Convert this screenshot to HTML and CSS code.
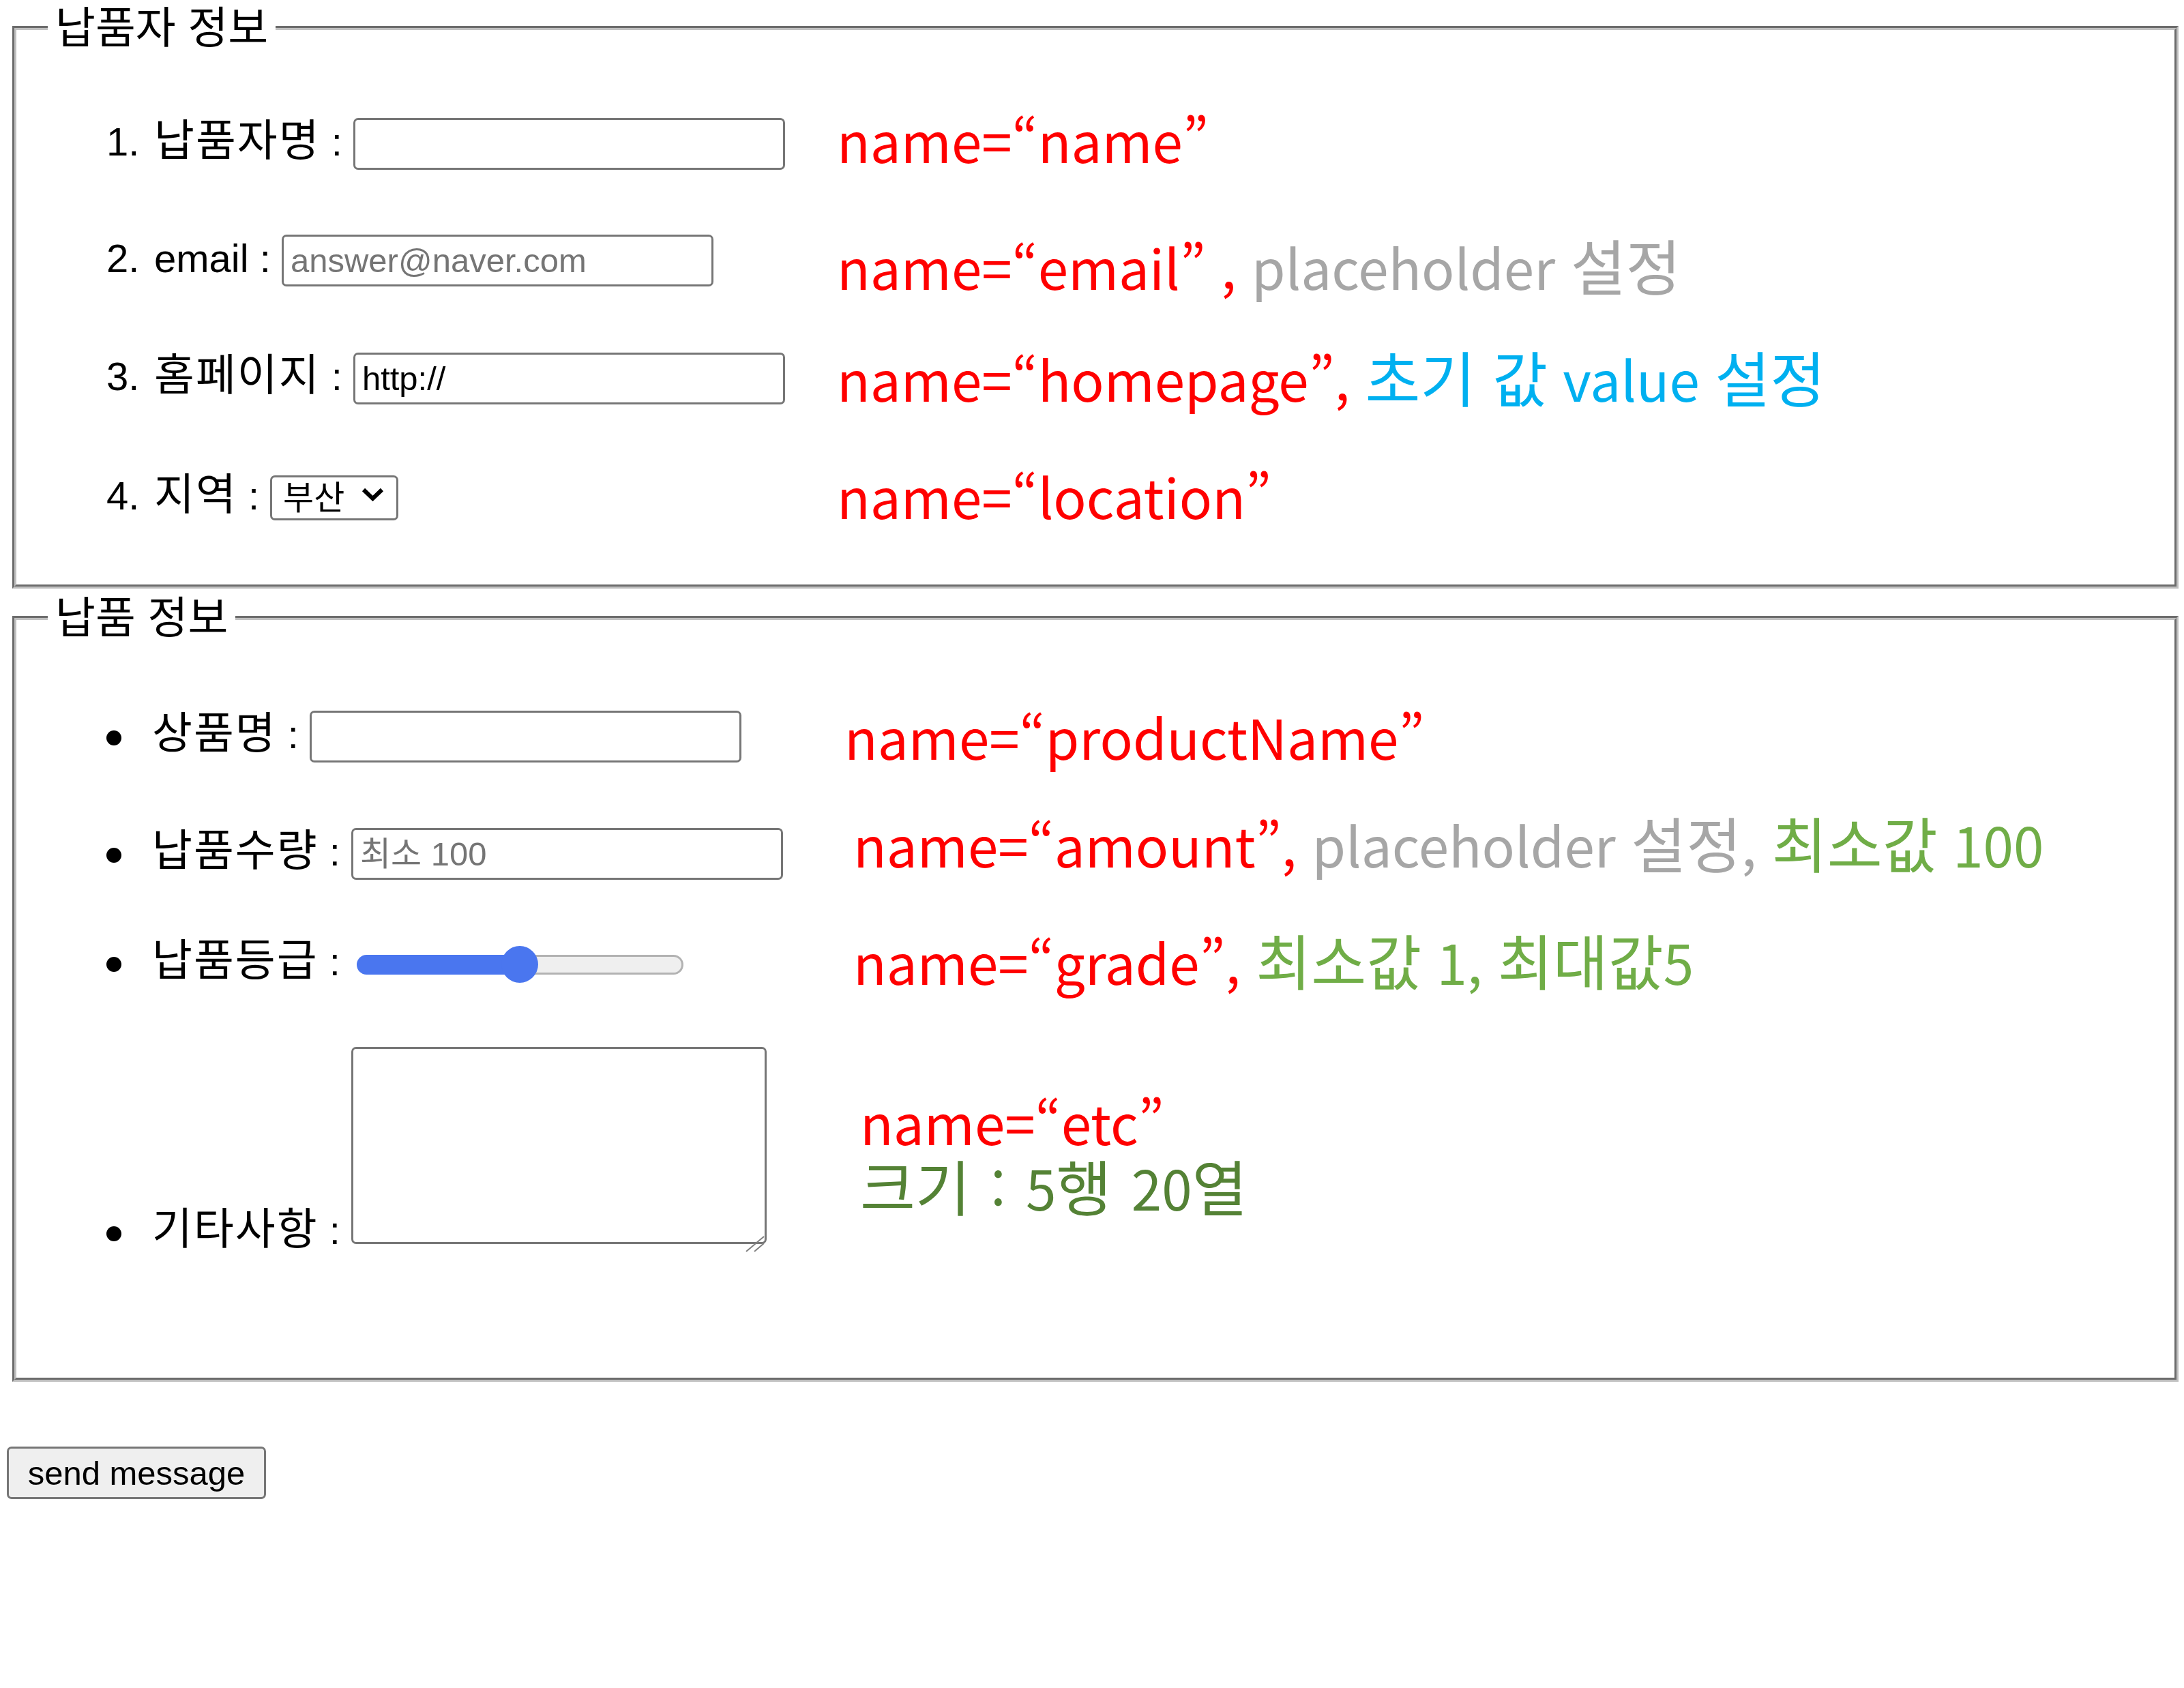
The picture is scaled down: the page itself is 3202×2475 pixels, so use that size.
FILE: index.html
```html
<!DOCTYPE html>
<html lang="ko">
<head>
<meta charset="utf-8">
<title>납품 정보 입력</title>
<link rel="stylesheet" href="styles.css">
</head>
<body>
<form class="order-form" action="#" method="post">
  <fieldset class="group">
    <legend class="group-title">납품자 정보</legend>
    <div class="rows rows-supplier">
      <div class="row">
        <div class="field"><span class="num">1.</span><span class="ko">납품자명</span> : <input class="text-input" type="text" name="name"></div>
        <p class="note note-up"><span class="c-red">name=“name”</span></p>
      </div>
      <div class="row">
        <div class="field"><span class="num">2.</span>email : <input class="text-input" type="email" name="email" placeholder="answer@naver.com"></div>
        <p class="note note-low"><span class="c-red">name=“email” ,</span> <span class="c-gray">placeholder <span class="hk">설정</span></span></p>
      </div>
      <div class="row">
        <div class="field"><span class="num">3.</span><span class="ko">홈페이지</span> : <input class="text-input" type="text" name="homepage" value="http://"></div>
        <p class="note"><span class="c-red">name=“homepage”,</span> <span class="c-blue"><span class="hk">초기 값</span> value <span class="hk">설정</span></span></p>
      </div>
      <div class="row">
        <div class="field"><span class="num">4.</span><span class="ko">지역</span> : <span class="select-wrap"><select class="select" name="location"><option>부산</option><option>서울</option><option>대구</option></select><svg class="chevron" viewBox="0 0 33 20" width="33" height="20" aria-hidden="true"><polyline points="3,3 16.5,16 30,3" fill="none" stroke="#000" stroke-width="6"/></svg></span></div>
        <p class="note"><span class="c-red">name=“location”</span></p>
      </div>
    </div>
  </fieldset>
  <fieldset class="group">
    <legend class="group-title">납품 정보</legend>
    <div class="rows rows-product">
      <div class="row">
        <div class="field"><span class="dot"></span><span class="ko">상품명</span> : <input class="text-input" type="text" name="productName"></div>
        <p class="note note-s1"><span class="c-red">name=“productName”</span></p>
      </div>
      <div class="row">
        <div class="field"><span class="dot"></span><span class="ko">납품수량</span> : <input class="text-input" type="number" name="amount" min="100" placeholder="최소 100"></div>
        <p class="note note-s2 note-up2"><span class="c-red">name=“amount”,</span> <span class="c-gray">placeholder <span class="hk">설정</span>,</span> <span class="c-green"><span class="hk">최소값</span> 100</span></p>
      </div>
      <div class="row row-short">
        <div class="field"><span class="dot"></span><span class="ko">납품등급</span> : <input class="grade" type="range" name="grade" min="1" max="5" value="3"></div>
        <p class="note note-s2"><span class="c-red">name=“grade”,</span> <span class="c-green"><span class="hk">최소값</span> 1, <span class="hk">최대값</span>5</span></p>
      </div>
      <div class="row row-tall">
        <div class="field field-tall"><span class="dot"></span><span class="ko">기타사항</span> : <span class="area-wrap"><textarea class="area" name="etc" rows="5" cols="20"></textarea><svg class="grip" viewBox="0 0 28 24" width="28" height="24" aria-hidden="true"><line x1="1" y1="23" x2="27" y2="1" stroke="#808080" stroke-width="2"/><line x1="13" y1="23" x2="27" y2="11" stroke="#808080" stroke-width="2"/></svg></span></div>
        <div class="note note-s3 note-etc">
          <p class="note-line c-red">name=“etc”</p>
          <p class="note-line note-size c-dkgreen"><span class="hk">크기</span> : 5<span class="hk">행</span> 20<span class="hk">열</span></p>
        </div>
      </div>
    </div>
  </fieldset>
  <button type="submit" class="submit">send message</button>
</form>
</body>
</html>
```

FILE: styles.css
```css
html, body {
  background: #fff;
}

body {
  margin: 0;
  padding: 6px 0 0 10px;
  font-family: "Liberation Sans", "Noto Sans CJK KR", sans-serif;
  font-size: 58px;
  color: #000;
}

.order-form {
  margin: 0;
}

.group {
  margin: 0 8px;
  padding: 0 40px 0 46px;
  border: 6px groove #c0c0c0;
  min-width: 0;
}

.group + .group {
  margin-top: 8px;
}

.group-title {
  padding: 0 11px;
  font-size: 64px;
  line-height: 70px;
}

.rows-supplier {
  padding: 48px 0 45px 86px;
}

.rows-product {
  padding: 52px 0 0 86px;
}

.row {
  display: flex;
  align-items: center;
  height: 172px;
}

.row-short {
  height: 143px;
}

.row-tall {
  height: 540px;
  align-items: flex-start;
}

.field {
  flex: none;
  width: 1071px;
  white-space: nowrap;
  line-height: 70px;
}

.field-tall {
  margin-top: 55px;
}

.ko {
  font-size: 64px;
  letter-spacing: 2px;
}

.num {
  display: inline-block;
  width: 70px;
}

.dot {
  display: inline-block;
  width: 22px;
  height: 22px;
  margin-right: 45px;
  border-radius: 50%;
  background: #000;
  vertical-align: middle;
}

.text-input {
  box-sizing: border-box;
  width: 633px;
  height: 76px;
  padding: 0 10px;
  border: 3px solid #767676;
  border-radius: 7px;
  background: #fff;
  color: #000;
  font: 49px "Liberation Sans", "Noto Sans CJK KR", sans-serif;
  vertical-align: baseline;
}

.text-input::placeholder {
  color: #757575;
}

.text-input[type="number"]::-webkit-inner-spin-button,
.text-input[type="number"]::-webkit-outer-spin-button {
  -webkit-appearance: none;
  margin: 0;
}

.select-wrap {
  position: relative;
  display: inline-block;
}

.select {
  -webkit-appearance: none;
  appearance: none;
  box-sizing: border-box;
  width: 188px;
  height: 66px;
  padding: 0 0 0 16px;
  border: 3px solid #767676;
  border-radius: 7px;
  background: #fff;
  color: #000;
  font: 49px "Liberation Sans", "Noto Sans CJK KR", sans-serif;
}

.chevron {
  position: absolute;
  left: 134px;
  top: 23px;
  pointer-events: none;
}

.grade {
  -webkit-appearance: none;
  appearance: none;
  width: 479px;
  height: 54px;
  margin: 0 0 0 8px;
  padding: 0;
  background: transparent;
  vertical-align: middle;
}

.grade::-webkit-slider-runnable-track {
  box-sizing: border-box;
  height: 29px;
  border: 3px solid transparent;
  border-radius: 15px;
  background:
    linear-gradient(to right, #4a76ef 50%, transparent 50%) border-box,
    linear-gradient(#efefef, #efefef) padding-box,
    linear-gradient(#b2b2b2, #b2b2b2) border-box;
}

.grade::-webkit-slider-thumb {
  -webkit-appearance: none;
  appearance: none;
  width: 54px;
  height: 54px;
  margin-top: -15.5px;
  border: none;
  border-radius: 50%;
  background: #4a76ef;
}

.area-wrap {
  position: relative;
  display: inline-block;
}

.area {
  box-sizing: border-box;
  width: 609px;
  height: 289px;
  padding: 6px 10px;
  border: 3px solid #767676;
  border-radius: 7px;
  background: #fff;
  font: 49px "Liberation Mono", monospace;
  resize: none;
  vertical-align: baseline;
}

.grip {
  position: absolute;
  right: 3px;
  bottom: 3px;
}

.note {
  margin: 0;
  font-family: "Noto Sans CJK KR", sans-serif;
  font-size: 80px;
  line-height: 96px;
  white-space: nowrap;
}

.note-line {
  margin: 0;
}

.note-size {
  word-spacing: 7px;
}

.hk {
  font-size: 88px;
  line-height: 1;
}

.note-up {
  margin-bottom: 12px;
}

.note-up2 {
  margin-bottom: 28px;
}

.note-low {
  margin-top: 16px;
}

.note-s1 {
  margin-left: 11px;
}

.note-s2 {
  margin-left: 24px;
}

.note-s3 {
  margin-left: 34px;
}

.note-etc {
  margin-top: 116px;
}

.c-red { color: #ff0000; }
.c-gray { color: #a6a6a6; }
.c-blue { color: #00b0f0; }
.c-green { color: #70ad47; }
.c-dkgreen { color: #548235; }

.submit {
  box-sizing: border-box;
  display: block;
  width: 380px;
  height: 77px;
  margin: 95px 0 0 0;
  padding: 0;
  border: 3px solid #767676;
  border-radius: 7px;
  background: #efefef;
  color: #000;
  font: 49px "Liberation Sans", sans-serif;
}
```
